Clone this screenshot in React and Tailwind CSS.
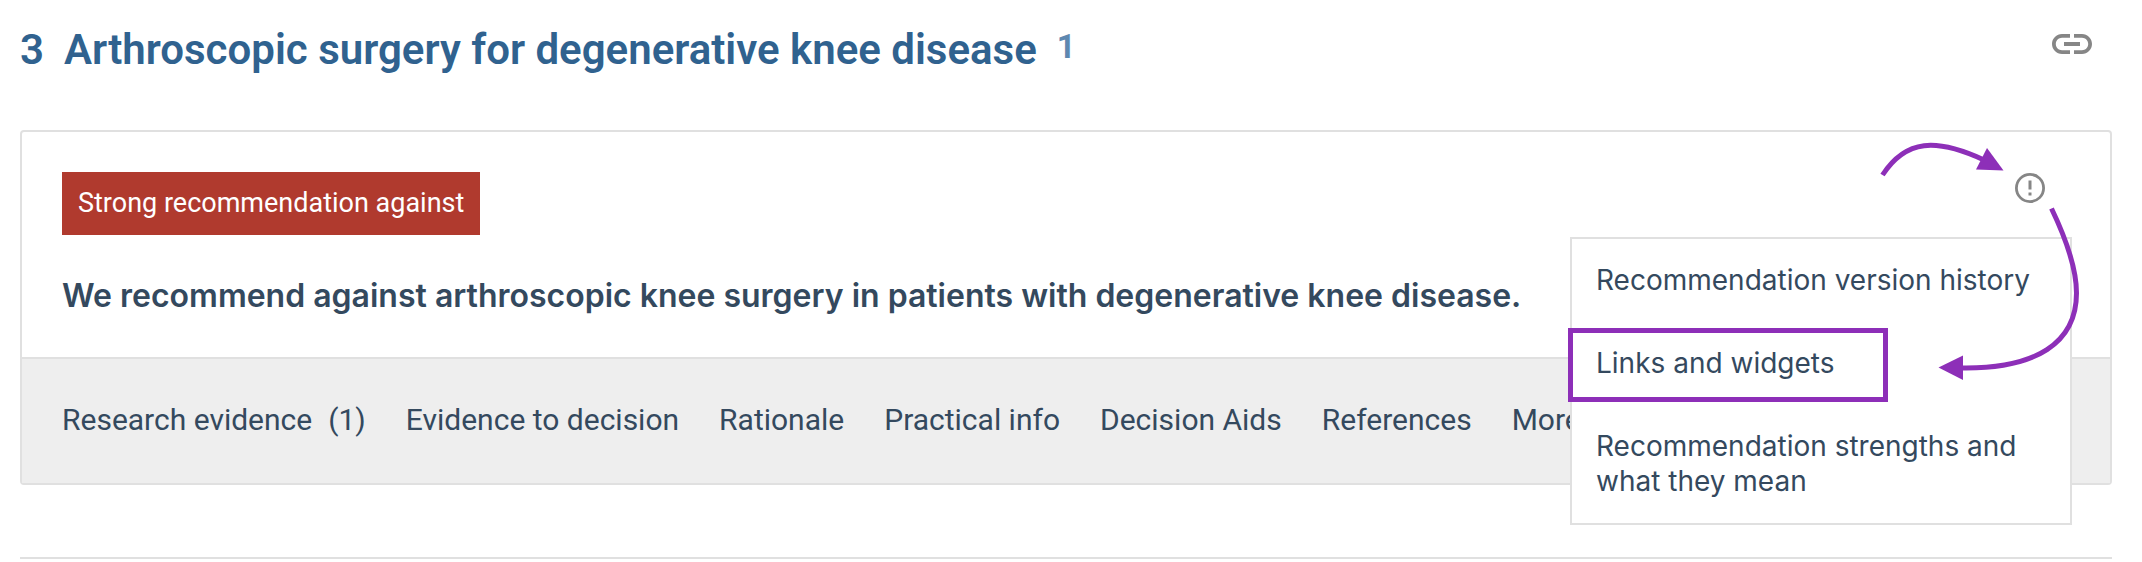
import { MdLink } from "react-icons/md";

const tabs = [
  "Evidence to decision",
  "Rationale",
  "Practical info",
  "Decision Aids",
  "References",
  "More info",
];

// Purple arrows that point from the info icon to the menu item
function Arrows() {
  return (
    <svg
      className="pointer-events-none absolute top-0 right-0 z-20"
      width="260"
      height="260"
      viewBox="1850 132 260 260"
      fill="none"
      stroke="#8d2fb8"
      strokeWidth="5"
    >
      <path d="M1882.500 175C1906 139 1936 138 1984 160" />
      <path d="M1987 148L2003.500 170.500L1976 169.500Z" fill="#8d2fb8" stroke="none" />
      <path d="M2051.500 208.500C2068 243 2076.500 272 2076.500 293C2076.500 343 2036 369 1962 368" />
      <path d="M1938.500 367.500L1963 355.500L1963 380Z" fill="#8d2fb8" stroke="none" />
    </svg>
  );
}

function InfoIcon() {
  return (
    <svg width="30" height="32" viewBox="0 -1 30 32" fill="none" stroke="#868686">
      <circle cx="15" cy="15" r="13.6" strokeWidth="2.8" />
      <path d="M15 7.5V16.5M15 19.5V22.5" strokeWidth="3" />
    </svg>
  );
}

export default function App() {
  return (
    <div className="bg-white pl-5 pr-[30px] font-[Roboto,sans-serif] text-[#34495e]">
      {/* Section heading */}
      <header className="flex items-start justify-between pt-5 pb-[50px]">
        <h1 className="flex text-[42px] leading-[60px] font-semibold text-[#30628f]">
          <span className="mr-5">3</span>
          Arthroscopic surgery for degenerative knee disease
          <sup className="top-0 ml-5 text-[33px] leading-[54px] font-bold text-[#5e88b0]">1</sup>
        </h1>
        <button type="button" aria-label="Copy link" className="mr-4">
          <MdLink size={48} color="#868686" />
        </button>
      </header>

      {/* Recommendation card */}
      <section className="relative rounded border-2 border-[#e0e0e0]">
        <div className="flex items-start justify-between px-10 pt-10 pb-10">
          <div>
            <div className="w-fit bg-[#b03a2e] px-4 text-[27px] leading-[63px] text-white">
              Strong recommendation against
            </div>
            <p className="mt-10 font-[Inter,sans-serif] text-[32px] leading-[42px] font-semibold">
              We recommend against arthroscopic knee surgery in patients with degenerative knee disease.
            </p>
          </div>
          <button type="button" aria-label="More options" className="mr-[25px]">
            <InfoIcon />
          </button>
        </div>

        <nav className="flex gap-10 border-t-2 border-[#e0e0e0] bg-[#eee] px-10 pb-0.5 text-[30px] leading-[122px]">
          <a href="#evidence" className="flex gap-4">
            <span>Research evidence</span>
            <span>(1)</span>
          </a>
          {tabs.map((tab) => (
            <a key={tab} href="#tab">
              {tab}
            </a>
          ))}
        </nav>

        {/* Options menu */}
        <div className="absolute top-[105px] right-[38px] z-10 w-[502px] border-2 border-[#e0e0e0] bg-white font-[Inter,sans-serif] text-[28px] leading-[35px]">
          <button type="button" className="block px-6 py-6 text-left">
            Recommendation version history
          </button>
          <button type="button" className="relative block px-6 py-6 text-left">
            Links and widgets
            {/* highlight frame */}
            <span className="absolute top-[6px] -left-1 h-[74px] w-80 border-5 border-[#8d2fb8]" />
          </button>
          <button type="button" className="block px-6 py-6 text-left">
            Recommendation strengths and what they mean
          </button>
        </div>
        <Arrows />
      </section>

      <hr className="mt-[72px] border-t-2 border-[#e0e0e0]" />
    </div>
  );
}
